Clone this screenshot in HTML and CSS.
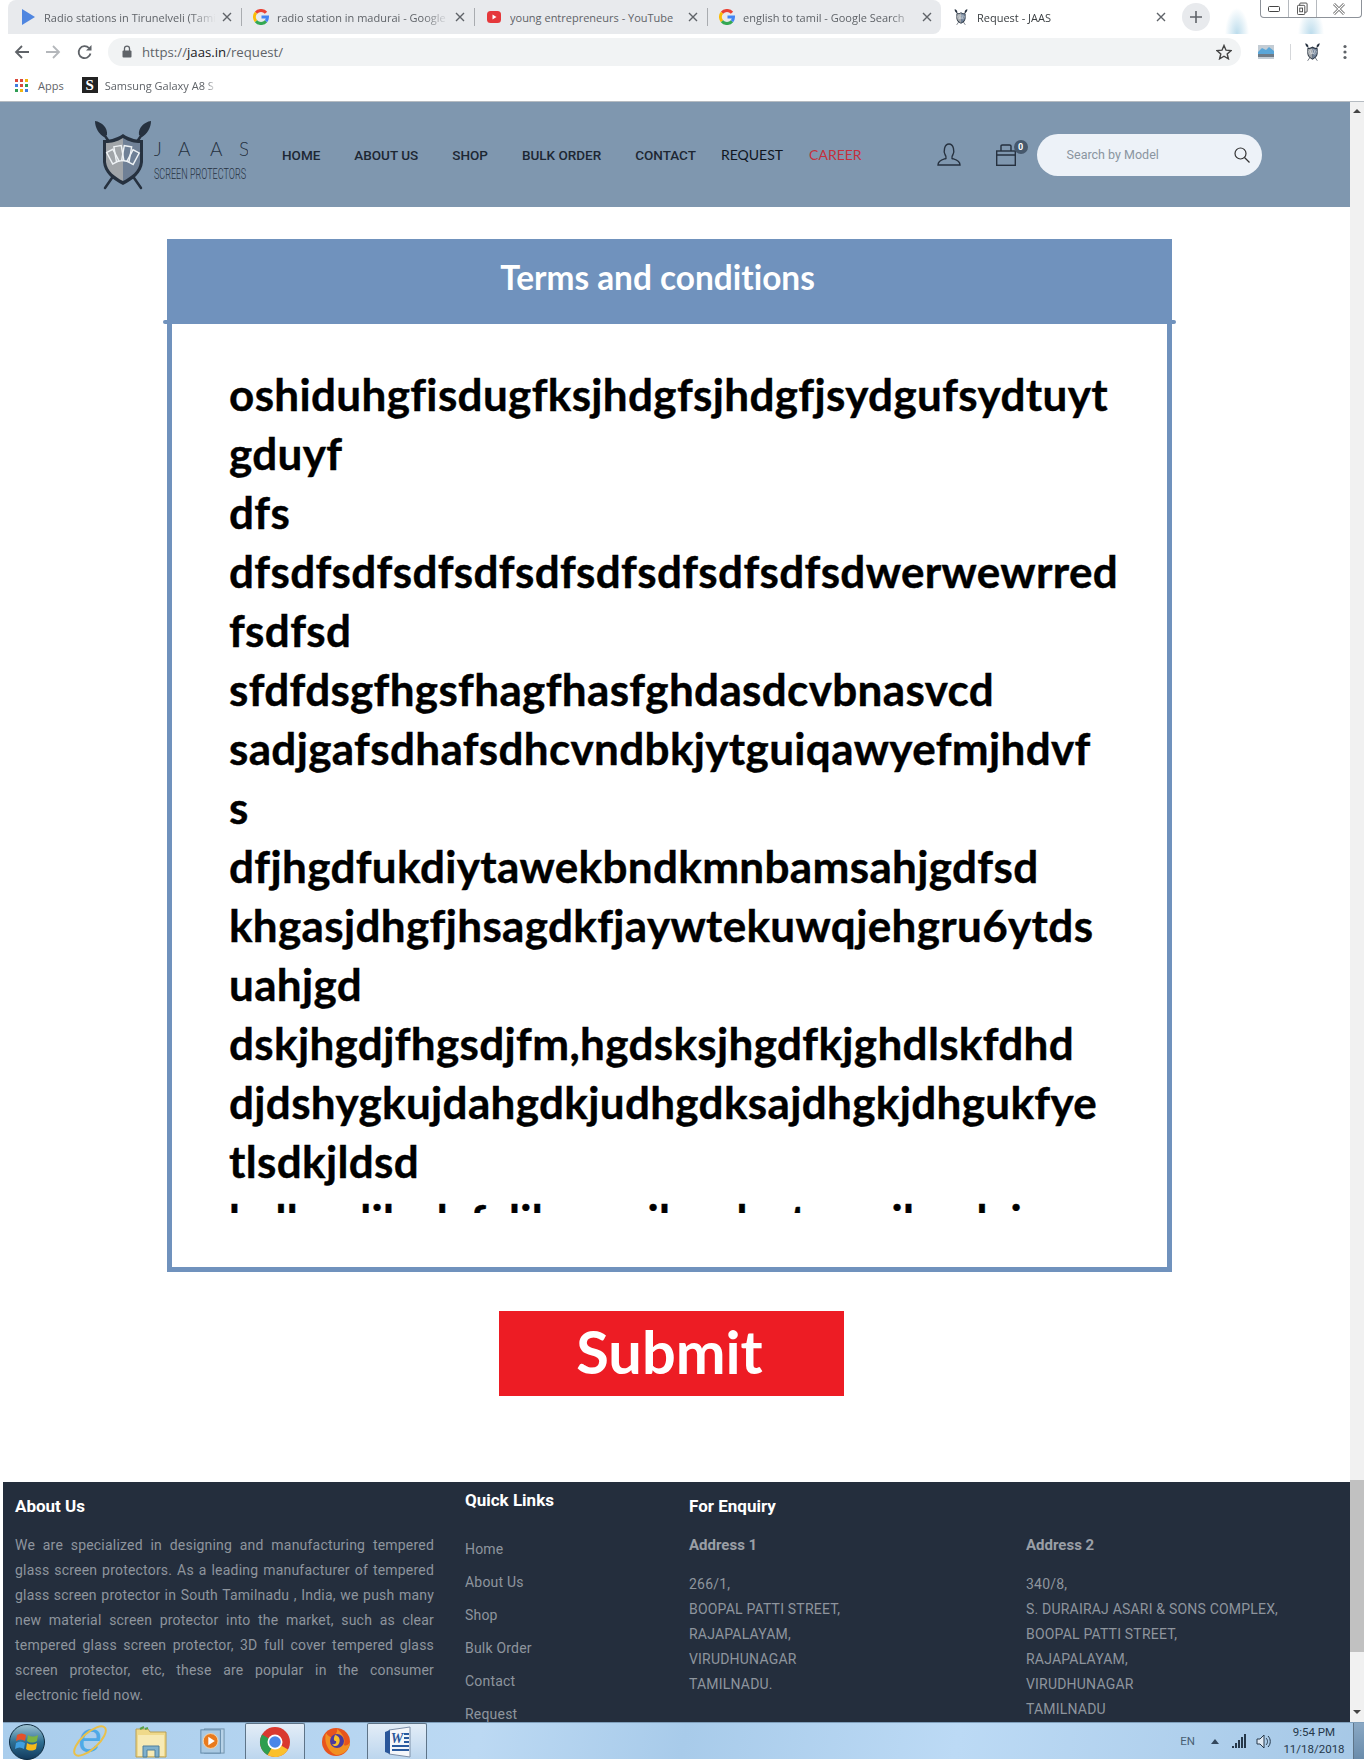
FILE: index.html
```html
<!DOCTYPE html>
<html>
<head>
    <title>Request - JAAS</title>
    <meta charset="UTF-8">
    <link rel="stylesheet" href="styles.css">
</head>
<body>
    <svg class="defs" width="0" height="0">
        <symbol id="g-logo" viewBox="0 0 16 16">
            <g fill="none" stroke-width="3">
                <path d="M13 3.8A6.5 6.5 0 0 0 3 3.8" stroke="#ea4335"/>
                <path d="M3 3.8A6.5 6.5 0 0 0 3 12.2" stroke="#fbbc05"/>
                <path d="M3 12.2A6.5 6.5 0 0 0 13 12.2" stroke="#34a853"/>
                <path d="M13 12.2A6.5 6.5 0 0 0 14.5 8H8.5" stroke="#4285f4"/>
            </g>
        </symbol>
        <symbol id="x-icon" viewBox="0 0 10 10">
            <path d="M1 1l8 8M9 1l-8 8" stroke="#5f6368" stroke-width="1.4" fill="none"/>
        </symbol>
        <symbol id="shield" viewBox="0 0 58 70">
            <g stroke="#26313f" fill="none" stroke-linecap="round">
                <path d="M9 13L47 68M49 13L11 68" stroke-width="2.5"/>
            </g>
            <path d="M1 1C8 2 14 8 13 15L10 17C5 14 1 8 1 1ZM57 1C50 2 44 8 45 15L48 17C53 14 57 8 57 1Z" fill="#26313f"/>
            <path d="M29 14C22 19 14 20 9 20V42C10 53 19 60 29 65C39 60 48 53 49 42V20C44 20 36 19 29 14Z" fill="#26313f"/>
            <path d="M29 18C23 22 17 23 12 23V42C13 51 21 57 29 61Z" fill="#a1a5a9"/>
            <path d="M29 18C35 22 41 23 46 23V42C45 51 37 57 29 61Z" fill="#6f8096"/>
            <g fill="none" stroke="#eef2f5" stroke-width="1.4">
                <rect x="15" y="30" width="7" height="13" transform="rotate(-28 19 36)"/>
                <rect x="21" y="26" width="7.500" height="15" transform="rotate(-10 25 33)"/>
                <rect x="29" y="26" width="7.500" height="15" transform="rotate(10 32 33)"/>
                <rect x="36" y="30" width="7" height="13" transform="rotate(28 38 36)"/>
            </g>
        </symbol>
    </svg>

    <div class="browser">
        <div class="tab-strip">
            <div class="tab tab-first">
                <svg class="tab-icon" viewBox="0 0 16 16"><path d="M2 0L15 8L2 16Z" fill="#4f86e0"/></svg>
                <span class="tab-title">Radio stations in Tirunelveli (Tamil</span>
                <svg class="tab-close"><use href="#x-icon"/></svg>
            </div>
            <div class="tab">
                <svg class="tab-icon"><use href="#g-logo"/></svg>
                <span class="tab-title">radio station in madurai - Google</span>
                <svg class="tab-close"><use href="#x-icon"/></svg>
            </div>
            <div class="tab">
                <svg class="tab-icon" viewBox="0 0 16 16"><rect x="1" y="2" width="14" height="12" rx="3.5" fill="#e5383b"/><path d="M6.5 5.5L10.5 8L6.5 10.5Z" fill="#fff"/></svg>
                <span class="tab-title tab-title-plain">young entrepreneurs - YouTube</span>
                <svg class="tab-close"><use href="#x-icon"/></svg>
            </div>
            <div class="tab tab-last">
                <svg class="tab-icon"><use href="#g-logo"/></svg>
                <span class="tab-title">english to tamil - Google Search</span>
                <svg class="tab-close"><use href="#x-icon"/></svg>
            </div>
            <div class="tab tab-active">
                <svg class="tab-icon"><use href="#shield"/></svg>
                <span class="tab-title">Request - JAAS</span>
                <svg class="tab-close"><use href="#x-icon"/></svg>
            </div>
            <div class="new-tab">
                <svg viewBox="0 0 12 12" width="12" height="12"><path d="M6 0V12M0 6H12" stroke="#5f6368" stroke-width="1.6"/></svg>
            </div>
            <div class="win-controls">
                <div class="win-btn"><svg viewBox="0 0 12 8" width="12" height="8"><rect x="0.5" y="1.5" width="11" height="5" rx="1" fill="#fff" stroke="#444"/></svg></div>
                <div class="win-btn"><svg viewBox="0 0 12 14" width="11" height="14"><rect x="3" y="0.5" width="8" height="10" rx="1" fill="none" stroke="#444"/><rect x="0.5" y="3" width="8" height="10" rx="1" fill="#fff" stroke="#444"/><rect x="3" y="6" width="3" height="4" fill="none" stroke="#444"/></svg></div>
                <div class="win-btn win-close"><svg viewBox="0 0 14 12" width="14" height="12"><path d="M2 1L12 11M12 1L2 11" stroke="#555" stroke-width="2.6"/><path d="M2 1L12 11M12 1L2 11" stroke="#fff" stroke-width="1.2"/></svg></div>
            </div>
        </div>

        <div class="toolbar">
            <svg class="tool-icon" viewBox="0 0 16 16"><path d="M15 8H2M8 2L2 8L8 14" fill="none" stroke="#5f6368" stroke-width="1.8"/></svg>
            <svg class="tool-icon tool-forward" viewBox="0 0 16 16"><path d="M1 8H14M8 2L14 8L8 14" fill="none" stroke="#b4b7bb" stroke-width="1.8"/></svg>
            <svg class="tool-icon" viewBox="0 0 16 16"><path d="M13.5 9.5A6 6 0 1 1 12 4" fill="none" stroke="#5f6368" stroke-width="1.8"/><path d="M14.5 1V6.5H9Z" fill="#5f6368"/></svg>
            <div class="omnibox">
                <svg class="lock" viewBox="0 0 10 13"><path d="M2.5 6V3.6a2.5 2.5 0 0 1 5 0V6" fill="none" stroke="#5f6368" stroke-width="1.3"/><rect x="0.5" y="5.5" width="9" height="7" rx="1" fill="#5f6368"/></svg>
                <span class="url">https://<b>jaas.in</b>/request/</span>
                <svg class="star" viewBox="0 0 16 16"><path d="M8 1.5L10 6.2L15 6.6L11.2 9.9L12.4 14.8L8 12.2L3.6 14.8L4.8 9.9L1 6.6L6 6.2Z" fill="none" stroke="#444" stroke-width="1.4"/></svg>
            </div>
            <svg class="ext-pic" viewBox="0 0 16 14"><rect width="16" height="14" fill="#c3ccd4"/><path d="M0 7L4 3L8 5L11 2L16 6V9H0Z" fill="#5aa6d8"/><rect y="9" width="16" height="3" fill="#6f7c88"/></svg>
            <div class="tool-sep"></div>
            <svg class="ext-shield"><use href="#shield"/></svg>
            <svg class="tool-dots" viewBox="0 0 4 16"><circle cx="2" cy="2.5" r="1.6"/><circle cx="2" cy="8" r="1.6"/><circle cx="2" cy="13.5" r="1.6"/></svg>
        </div>

        <div class="bookmarks">
            <svg class="apps-icon" viewBox="0 0 13 13">
                <g fill="#d9483b"><rect width="3" height="3"/><rect x="5" width="3" height="3"/></g><rect x="10" width="3" height="3" fill="#f2b50f"/>
                <g fill="#3f7de0"><rect y="5" width="3" height="3"/></g><rect x="5" y="5" width="3" height="3" fill="#d9483b"/><rect x="10" y="5" width="3" height="3" fill="#2f9e55"/>
                <rect y="10" width="3" height="3" fill="#2f9e55"/><rect x="5" y="10" width="3" height="3" fill="#f2b50f"/><rect x="10" y="10" width="3" height="3" fill="#3f7de0"/>
            </svg>
            <span class="bm-text">Apps</span>
            <span class="bm-s">S</span>
            <span class="bm-text bm-fade">Samsung Galaxy A8 S</span>
        </div>
    </div>

    <div class="viewport">
        <div class="site">
            <header class="site-header">
                <svg class="logo" viewBox="0 0 154 70" width="154" height="70">
                    <use href="#shield" width="58" height="70"/>
                    <text class="logo-name" x="60 84 116 145" y="36">JAAS</text>
                    <text class="logo-sub" x="60" y="59" textLength="92" lengthAdjust="spacingAndGlyphs">SCREEN PROTECTORS</text>
                </svg>
                <nav class="main-nav">
                    <a>HOME</a>
                    <a>ABOUT US</a>
                    <a>SHOP</a>
                    <a>BULK ORDER</a>
                    <a>CONTACT</a>
                    <a class="nav-request">REQUEST</a>
                    <a class="nav-career">CAREER</a>
                </nav>
                <svg class="user-icon" viewBox="0 0 24 23"><path d="M1 22C1 17 6 16.500 9 15.500C9.500 14 9 13 8 11.500C6.500 9 7 1 12 1C17 1 17.500 9 16 11.500C15 13 14.500 14 15 15.500C18 16.500 23 17 23 22Z" fill="none" stroke="#26313f" stroke-width="1.4"/></svg>
                <div class="cart">
                    <svg viewBox="0 0 20 22" width="20" height="22"><rect x="0.700" y="7" width="18.600" height="14.300" fill="none" stroke="#26313f" stroke-width="1.400"/><path d="M5 7V2C5 1 6 1 6.500 1H13.500C14 1 15 1 15 2V7M1 11H19" fill="none" stroke="#26313f" stroke-width="1.400"/></svg>
                    <span class="cart-badge">0</span>
                </div>
                <div class="search">
                    <span>Search by Model</span>
                    <svg viewBox="0 0 16 16" width="16" height="16"><circle cx="6.500" cy="6.500" r="5.500" fill="none" stroke="#333" stroke-width="1.200"/><path d="M10.500 10.500L15.500 15.500" stroke="#333" stroke-width="1.300"/></svg>
                </div>
            </header>

            <main class="terms">
                <h2 class="terms-title">Terms and conditions</h2>
                <div class="terms-box">
                    <div class="terms-text">
                        oshiduhgfisdugfksjhdgfsjhdgfjsydgufsydtuyt<br>
                        gduyf<br>
                        dfs<br>
                        dfsdfsdfsdfsdfsdfsdfsdfsdfsdfsdwerwewrred<br>
                        fsdfsd<br>
                        sfdfdsgfhgsfhagfhasfghdasdcvbnasvcd<br>
                        sadjgafsdhafsdhcvndbkjytguiqawyefmjhdvf<br>
                        s<br>
                        dfjhgdfukdiytawekbndkmnbamsahjgdfsd<br>
                        khgasjdhgfjhsagdkfjaywtekuwqjehgru6ytds<br>
                        uahjgd<br>
                        dskjhgdjfhgsdjfm,hgdsksjhgdfkjghdlskfdhd<br>
                        djdshygkujdahgdkjudhgdksajdhgkjdhgukfye<br>
                        tlsdkjldsd<br>
                        kallsaslilaslafalilsasasilaselastasasilasslai
                    </div>
                </div>
                <button class="submit">Submit</button>
            </main>

            <footer class="site-footer">
                <div class="foot-about">
                    <h4>About Us</h4>
                    <p>We are specialized in designing and manufacturing tempered glass screen protectors. As a leading manufacturer of tempered glass screen protector in South Tamilnadu , India, we push many new material screen protector into the market, such as clear tempered glass screen protector, 3D full cover tempered glass screen protector, etc, these are popular in the consumer electronic field now.</p>
                </div>
                <div class="foot-links">
                    <h4>Quick Links</h4>
                    <a>Home</a>
                    <a>About Us</a>
                    <a>Shop</a>
                    <a>Bulk Order</a>
                    <a>Contact</a>
                    <a>Request</a>
                </div>
                <div class="foot-address">
                    <h4>For Enquiry</h4>
                    <h5>Address 1</h5>
                    <p>266/1,<br>BOOPAL PATTI STREET,<br>RAJAPALAYAM,<br>VIRUDHUNAGAR<br>TAMILNADU.</p>
                </div>
                <div class="foot-address">
                    <h4>&nbsp;</h4>
                    <h5>Address 2</h5>
                    <p>340/8,<br>S. DURAIRAJ ASARI &amp; SONS COMPLEX,<br>BOOPAL PATTI STREET,<br>RAJAPALAYAM,<br>VIRUDHUNAGAR<br>TAMILNADU</p>
                </div>
            </footer>
        </div>

        <div class="scrollbar">
            <span class="arrow-up"></span>
            <span class="thumb"></span>
            <span class="arrow-down"></span>
        </div>
    </div>

    <div class="taskbar">
        <svg class="start-orb" viewBox="0 0 36 36">
            <defs>
                <linearGradient id="orb-glass" x1="0" y1="0" x2="0" y2="1">
                    <stop offset="0" stop-color="#9fc4d4"/>
                    <stop offset="0.500" stop-color="#2f6f92"/>
                    <stop offset="1" stop-color="#123a5c"/>
                </linearGradient>
            </defs>
            <circle cx="18" cy="18" r="17.500" fill="url(#orb-glass)" stroke="#0d2b40"/>
            <path d="M8 11C11 9 14 9 17 11L16 17C13 15 10 15 7 17Z" fill="#e4512b"/>
            <path d="M19 11C22 13 25 13 29 11L28 17C25 19 21 19 18 17Z" fill="#7cb342"/>
            <path d="M7 19C10 17 13 17 16 19L15 25C12 23 9 23 6 25Z" fill="#3f9fe0"/>
            <path d="M18 19C21 21 24 21 28 19L27 25C24 27 20 27 17 25Z" fill="#f6b91a"/>
        </svg>
        <div class="task-item">
            <svg viewBox="0 0 36 36" width="36" height="36">
                <text class="ie-e" x="18" y="29">e</text>
                <ellipse cx="18" cy="18" rx="20" ry="8" fill="none" stroke="#e9c04a" stroke-width="2" transform="rotate(-42 18 18)"/>
            </svg>
        </div>
        <div class="task-item">
            <svg viewBox="0 0 32 34" width="32" height="34"><path d="M1 5H13L15 8H31V33H1Z" fill="#efd98a" stroke="#b89f55"/><path d="M5 5L9 3M10 5L13 4" stroke="#5aa04a" stroke-width="2"/><rect x="3" y="11" width="26" height="21" fill="#f7eab5"/><path d="M8 33V22H24V33H20V26H12V33Z" fill="#7fb0cc" stroke="#4f7f9c"/></svg>
        </div>
        <div class="task-item">
            <svg viewBox="0 0 28 32" width="26" height="30"><rect x="6" y="3" width="21" height="26" fill="#b8d3e8" stroke="#6f8fa8"/><rect x="2" y="4" width="21" height="25" fill="#a9c9e2" stroke="#5f86a6"/><circle cx="12.500" cy="16" r="8" fill="#e87a1d" stroke="#f6d9b0"/><path d="M10 11.500L17 16L10 20.500Z" fill="#fff"/></svg>
        </div>
        <div class="task-item task-open task-chrome">
            <svg viewBox="0 0 32 32" width="32" height="32">
                <circle cx="16" cy="16" r="15" fill="#d9392f"/>
                <path d="M16 16L29 23.500A15 15 0 0 1 8.500 29Z" fill="#fbc02d"/>
                <path d="M16 16L8.500 29A15 15 0 0 1 3 8.500Z" fill="#2e9e4f"/>
                <circle cx="16" cy="16" r="7.500" fill="#fff"/>
                <circle cx="16" cy="16" r="5.800" fill="#4a86e8"/>
            </svg>
        </div>
        <div class="task-item">
            <svg viewBox="0 0 32 32" width="32" height="32">
                <circle cx="16" cy="17" r="14" fill="#e8541e"/>
                <path d="M6 8C4 14 6 26 16 30C25 30 30 23 30 17C28 21 25 21 24 20C26 14 22 8 17 4C18 8 14 10 13 13C10 12 8 11 6 8Z" fill="#f29122"/>
                <circle cx="17" cy="16" r="7" fill="#4b3a9e"/>
                <path d="M15 10C20 11 21 16 18 20C16 22 13 21 12 19C15 20 17 18 16 16C14 16 13 14 15 10Z" fill="#f8c02a"/>
            </svg>
        </div>
        <div class="task-item task-open">
            <svg viewBox="0 0 32 32" width="32" height="32"><path d="M8 4L29 1V31L8 28Z" fill="#f4f6fa" stroke="#7d8fa8"/><path d="M4 6L9 4V28L4 26Z" fill="#2b579a"/><text class="word-w" x="16" y="17">W</text><path d="M23 8H28M23 12H28M23 16H28M11 20H28M11 24H28" stroke="#2a5a9e" stroke-width="2"/></svg>
        </div>
        <div class="tray">
            <span class="tray-lang">EN</span>
            <svg class="tray-arrow" viewBox="0 0 8 5" width="8" height="5"><path d="M0 5L4 0L8 5Z" fill="#33475c"/></svg>
            <svg viewBox="0 0 15 14" width="15" height="14"><path d="M1 12v2M4 9v5M7 6v8M10 3v11M13 0v14" stroke="#26384a" stroke-width="2"/></svg>
            <svg viewBox="0 0 15 15" width="15" height="15"><path d="M1 5H4L8 1V14L4 10H1Z" fill="#dfe9f3" stroke="#26384a"/><path d="M10 4C12 6 12 9 10 11M12 2C15 5 15 10 12 13" fill="none" stroke="#26384a"/></svg>
            <div class="tray-clock">
                <div>9:54 PM</div>
                <div>11/18/2018</div>
            </div>
            <div class="show-desktop"></div>
        </div>
    </div>
</body>
</html>
```

FILE: styles.css
```css
* {
    box-sizing: border-box;
}
html, body {
    margin: 0;
    height: 1760px;
    overflow: hidden;
}
body {
    display: flex;
    flex-direction: column;
    background-color: #fff;
    font-family: "Roboto", "Liberation Sans", sans-serif;
    color: #333;
}
.defs {
    position: absolute;
}

/* browser top */
.browser {
    height: 102px;
    flex: none;
    border-bottom: 1px solid #b5bbc1;
}
.tab-strip {
    height: 34px;
    display: flex;
    align-items: stretch;
    padding-left: 8px;
    background:
        radial-gradient(12px 26px at 1237px 34px, #bcdcec, transparent),
        radial-gradient(13px 26px at 1311px 34px, #bcdcec, transparent),
        #fff;
}
.tab {
    width: 233px;
    display: flex;
    align-items: center;
    padding: 0 9px 0 12px;
    background-color: #e8eaed;
    font-family: "Open Sans", sans-serif;
    font-size: 11px;
    color: #5f6368;
    position: relative;
}
.tab-first {
    width: 233px;
    border-radius: 8px 0 0 0;
}
.tab-last {
    width: 234px;
    border-radius: 0 8px 8px 0;
}
.tab + .tab::before {
    content: "";
    position: absolute;
    left: 0;
    top: 8px;
    bottom: 8px;
    width: 1px;
    background-color: #a9acb0;
}
.tab-active {
    width: 234px;
    background-color: #fff;
    color: #3c4043;
}
.tab-active::before {
    display: none;
}
.tab-icon {
    width: 16px;
    height: 16px;
    flex: none;
    margin-right: 8px;
}
.tab-title {
    flex: 1;
    white-space: nowrap;
    overflow: hidden;
    -webkit-mask-image: linear-gradient(to right, #000 85%, transparent);
    mask-image: linear-gradient(to right, #000 85%, transparent);
}
.tab-title-plain {
    -webkit-mask-image: none;
    mask-image: none;
}
.tab-close {
    width: 10px;
    height: 10px;
    flex: none;
    margin-left: 6px;
}
.new-tab {
    width: 28px;
    height: 28px;
    margin: 3px 0 0 7px;
    border-radius: 50%;
    background-color: #e8eaed;
    display: flex;
    align-items: center;
    justify-content: center;
}
.win-controls {
    margin-left: auto;
    margin-right: 2px;
    width: 102px;
    height: 18px;
    display: flex;
    border: 1px solid #8d9299;
    border-top: none;
    border-radius: 0 0 4px 4px;
    background-color: #fff;
}
.win-btn {
    flex: 1;
    display: flex;
    align-items: center;
    justify-content: center;
    border-left: 1px solid #b5b9be;
}
.win-btn:first-child {
    border-left: none;
}
.win-close {
    flex: 1.650;
}

.toolbar {
    height: 35px;
    display: flex;
    align-items: center;
    padding-left: 14px;
    background-color: #fff;
}
.tool-icon {
    width: 16px;
    height: 16px;
    margin-right: 15px;
    flex: none;
}
.tool-forward {
    margin-right: 16px;
}
.omnibox {
    width: 1133px;
    height: 28px;
    border-radius: 14px;
    background-color: #f1f3f4;
    display: flex;
    align-items: center;
    padding: 0 9px 0 14px;
}
.lock {
    width: 10px;
    height: 13px;
    flex: none;
    margin-right: 10px;
}
.url {
    font-family: "Open Sans", sans-serif;
    font-size: 13.200px;
    color: #5f6368;
}
.url b {
    font-weight: normal;
    color: #202124;
}
.star {
    width: 16px;
    height: 16px;
    margin-left: auto;
}
.ext-pic {
    width: 16px;
    height: 14px;
    margin-left: 17px;
}
.tool-sep {
    width: 1px;
    height: 16px;
    margin-left: 16px;
    background-color: #d5d7da;
}
.ext-shield {
    width: 15px;
    height: 18px;
    margin-left: 14px;
}
.tool-dots {
    width: 4px;
    height: 16px;
    margin-left: 23px;
    fill: #5f6368;
}

.bookmarks {
    height: 32px;
    display: flex;
    align-items: center;
    padding-left: 15px;
    background-color: #fff;
    font-family: "Open Sans", sans-serif;
    font-size: 11px;
    color: #5f6368;
}
.apps-icon {
    width: 13px;
    height: 13px;
    margin-right: 10px;
}
.bm-s {
    width: 16px;
    height: 16px;
    margin: 0 7px 0 18px;
    background-color: #222;
    color: #fff;
    font-family: "Liberation Serif", serif;
    font-weight: bold;
    font-size: 15px;
    line-height: 16px;
    text-align: center;
}
.bm-fade {
    width: 112px;
    white-space: nowrap;
    overflow: hidden;
    -webkit-mask-image: linear-gradient(to right, #000 90%, transparent);
    mask-image: linear-gradient(to right, #000 90%, transparent);
}

/* page */
.viewport {
    height: 1620px;
    flex: none;
    display: flex;
}
.site {
    width: 1350px;
    flex: none;
}
.site-header {
    height: 105px;
    display: flex;
    align-items: center;
    padding-left: 94px;
    background-color: #7f97af;
}
.logo {
    flex: none;
    margin-top: 1px;
}
.logo-name {
    font-family: "Lato", sans-serif;
    font-size: 19px;
    font-weight: 300;
    fill: #26313f;
}
.logo-sub {
    font-family: "Roboto", sans-serif;
    font-size: 15px;
    font-weight: 300;
    fill: #26313f;
}
.main-nav {
    display: flex;
    align-items: center;
    gap: 34px;
    margin-left: 34px;
    font-size: 13.500px;
    font-weight: 500;
    color: #1d2733;
    white-space: nowrap;
}
.main-nav .nav-request {
    margin-left: -9px;
    font-family: "Lato", sans-serif;
    font-size: 14px;
    font-weight: normal;
    color: #10161f;
}
.main-nav .nav-career {
    margin-left: -8px;
    font-family: "Lato", sans-serif;
    font-size: 14px;
    font-weight: normal;
    color: #c5303c;
}
.user-icon {
    width: 24px;
    height: 23px;
    flex: none;
    margin-left: 75px;
}
.cart {
    position: relative;
    width: 20px;
    height: 22px;
    flex: none;
    margin-left: 35px;
}
.cart-badge {
    position: absolute;
    left: 18px;
    top: -4px;
    width: 14px;
    height: 14px;
    border-radius: 50%;
    background-color: #46586c;
    color: #fff;
    font-size: 9px;
    font-weight: 700;
    line-height: 14px;
    text-align: center;
}
.search {
    width: 225px;
    height: 42px;
    margin-left: 21px;
    flex: none;
    border-radius: 21px;
    background-color: #edf2f8;
    display: flex;
    align-items: center;
    justify-content: space-between;
    padding: 0 12px 0 30px;
    font-size: 12.500px;
    color: #8a95a0;
}

/* terms */
.terms {
    padding: 32px 0 86px 167px;
}
.terms-title {
    width: 1005px;
    height: 85px;
    margin: 0;
    padding-right: 24px;
    position: relative;
    background-color: #7092bd;
    color: #fff;
    font-family: "Lato", sans-serif;
    font-size: 33.400px;
    font-weight: 700;
    font-variant-ligatures: none;
    line-height: 77px;
    text-align: center;
}
.terms-title::after {
    content: "";
    position: absolute;
    left: -4px;
    right: -4px;
    top: 81px;
    height: 4px;
    border-radius: 2px;
    background-color: #7092bd;
}
.terms-box {
    width: 1005px;
    height: 948px;
    padding: 41px 50px 54px 57px;
    border: 5px solid #7092bd;
    border-top: none;
}
.terms-text {
    height: 848px;
    overflow: hidden;
    white-space: nowrap;
    font-family: "Lato", sans-serif;
    font-size: 44px;
    font-weight: 700;
    font-variant-ligatures: none;
    letter-spacing: 0.350px;
    line-height: 59px;
    color: #000;
    -webkit-text-stroke: 0.400px #000;
}
.submit {
    display: block;
    width: 345px;
    height: 85px;
    margin: 39px 0 0 332px;
    padding: 0 4px 4px 0;
    border: none;
    background-color: #ed1c24;
    color: #fff;
    font-family: "Lato", sans-serif;
    font-size: 59.500px;
    font-weight: 700;
    line-height: 81px;
}

/* footer */
.site-footer {
    height: 240px;
    margin-left: 3px;
    padding: 0 0 0 12px;
    overflow: hidden;
    display: grid;
    grid-template-columns: 450px 224px 337px 1fr;
    background-color: #242e3d;
    font-size: 14px;
    letter-spacing: 0.200px;
    color: #8e959d;
}
.site-footer h4 {
    margin: 14px 0 0;
    color: #fff;
    font-size: 17px;
    font-weight: 700;
    letter-spacing: 0;
    line-height: 20px;
}
.foot-about p {
    width: 419px;
    margin: 17px 0 0;
    line-height: 25px;
    text-align: justify;
}
.site-footer .foot-links h4 {
    margin-top: 8px;
}
.foot-links a {
    display: block;
    line-height: 33px;
}
.foot-links h4 + a {
    margin-top: 23px;
}
.foot-address h5 {
    margin: 17px 0 0;
    font-size: 15px;
    font-weight: 700;
    letter-spacing: 0;
    line-height: 25px;
    color: #9a9fa6;
}
.foot-address p {
    margin: 14px 0 0;
    line-height: 25px;
    white-space: nowrap;
}

/* scrollbar */
.scrollbar {
    width: 14px;
    flex: none;
    display: flex;
    flex-direction: column;
    align-items: center;
    background-color: #f1f1f1;
}
.arrow-up {
    margin-top: 7px;
    border-left: 4px solid transparent;
    border-right: 4px solid transparent;
    border-bottom: 4px solid #444;
}
.thumb {
    width: 14px;
    height: 172px;
    margin-top: 1367px;
    background-color: #c1c1c1;
}
.arrow-down {
    margin-top: 58px;
    border-left: 4px solid transparent;
    border-right: 4px solid transparent;
    border-top: 4px solid #444;
}

/* windows taskbar */
.taskbar {
    height: 37px;
    flex: none;
    margin-left: 3px;
    display: flex;
    align-items: stretch;
    background: linear-gradient(100deg, #a9cdec 0%, #bcd9f3 35%, #a8cbea 50%, #bcdaf5 70%, #a6c8e6 100%);
    border-top: 1px solid #7f9fbb;
}
.start-orb {
    width: 36px;
    height: 36px;
    margin: 1px 15px 0 6px;
    flex: none;
}
.task-item {
    width: 60px;
    flex: none;
    display: flex;
    align-items: center;
    justify-content: center;
    margin-right: 1px;
}
.task-open {
    background: linear-gradient(#e3edf7, #bcd6ee);
    border: 1px solid #5e7488;
    border-bottom: none;
    border-radius: 2px 2px 0 0;
}
.task-chrome {
    margin-left: 2px;
}
.ie-e {
    font-family: "Liberation Sans", sans-serif;
    font-style: italic;
    font-size: 42px;
    fill: #4fa9e6;
    text-anchor: middle;
}
.word-w {
    font-family: "Liberation Serif", serif;
    font-style: italic;
    font-weight: bold;
    font-size: 14px;
    fill: #2b579a;
    text-anchor: middle;
}
.tray {
    margin-left: auto;
    display: flex;
    align-items: center;
    gap: 9px;
    font-size: 11.500px;
    color: #26384a;
}
.tray-lang {
    margin-right: 7px;
    color: #4a5f73;
}
.tray-arrow {
    margin-right: 4px;
}
.tray-clock {
    width: 72px;
    margin-left: -2px;
    text-align: center;
    line-height: 17px;
}
.show-desktop {
    width: 11px;
    align-self: stretch;
    margin-left: -6px;
    background: linear-gradient(#8aa8c4, #6a8cab);
    border-left: 1px solid #5e7488;
}
```
